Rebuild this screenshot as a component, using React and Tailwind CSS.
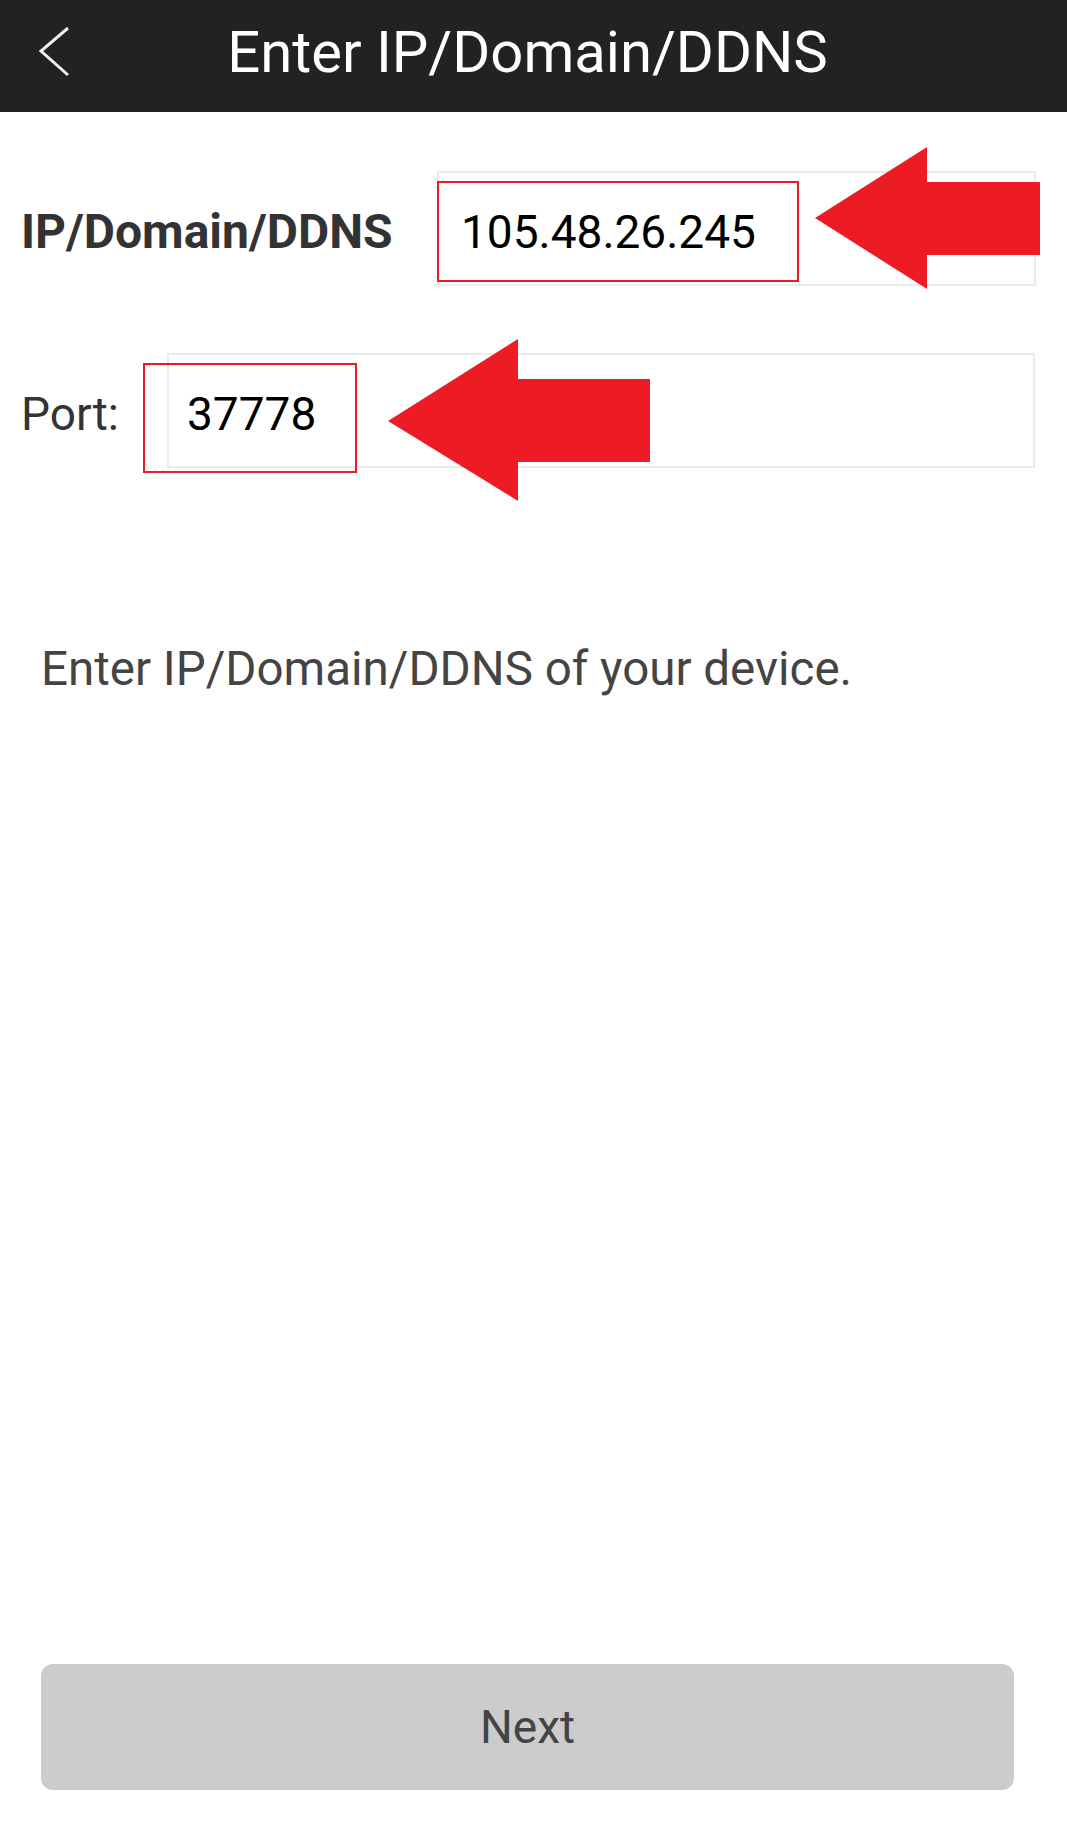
const font = { fontFamily: 'Roboto, "Liberation Sans", sans-serif' };

const App = () => {
  return (
    <div className="relative flex min-h-[1843px] w-[1067px] flex-col bg-white" style={font}>
      {/* top bar */}
      <header className="flex h-[112px] items-center bg-[#222222] pb-[8px]">
        <div className="w-[100px] pl-[38px]">
          <svg width="32" height="50" viewBox="0 0 32 50" fill="none">
            <polyline points="30,1 3,24 30,48" stroke="#f2f2f2" strokeWidth="3" />
          </svg>
        </div>
        <h1 className="flex-1 pr-[12px] text-center text-[58px] leading-none font-normal text-white">
          Enter IP/Domain/DDNS
        </h1>
        <div className="w-[100px]" />
      </header>

      {/* IP row */}
      <div className="mt-[59px] flex items-center pl-[21px]">
        <span className="pt-[6px] text-[48px] leading-none font-bold text-[#333333]">
          IP/Domain/DDNS
        </span>
        <div className="relative ml-auto mr-[31px] flex h-[115px] w-[599px] items-center border-2 border-[#ebebeb] pl-[22px] pt-[6px]">
          <span className="text-[46px] leading-none text-black">105.48.26.245</span>
          <div className="absolute -left-[2px] top-[8px] h-[101px] w-[362px] border-2 border-[#ed1c24]" />
        </div>
      </div>

      {/* Port row */}
      <div className="mt-[67px] flex items-center pl-[21px]">
        <span className="pt-[6px] text-[46px] leading-none text-[#333333]">Port:</span>
        <div className="relative ml-auto mr-[32px] flex h-[115px] w-[868px] items-center border-2 border-[#ebebeb] pl-[18px] pt-[6px]">
          <span className="text-[46px] leading-none text-black">37778</span>
          <div className="absolute -left-[26px] top-[8px] h-[110px] w-[214px] border-2 border-[#ed1c24]" />
        </div>
      </div>

      <p className="mt-[178px] pl-[41px] text-[47.5px] leading-none text-[#444444]">
        Enter IP/Domain/DDNS of your device.
      </p>

      <button className="mt-auto mb-[53px] ml-[41px] h-[126px] w-[973px] rounded-[12px] bg-[#cccccc] text-[46px] leading-none text-[#444444]">
        Next
      </button>

      {/* annotation arrows */}
      <svg
        className="pointer-events-none absolute left-0 top-0"
        width="1067"
        height="520"
        viewBox="0 0 1067 520"
      >
        <polygon
          points="815,218 927,147 927,182 1040,182 1040,255 927,255 927,289"
          fill="#ed1c24"
        />
        <polygon
          points="388,421 518,339 518,379 650,379 650,462 518,462 518,501"
          fill="#ed1c24"
        />
      </svg>
    </div>
  );
};

export default App;
